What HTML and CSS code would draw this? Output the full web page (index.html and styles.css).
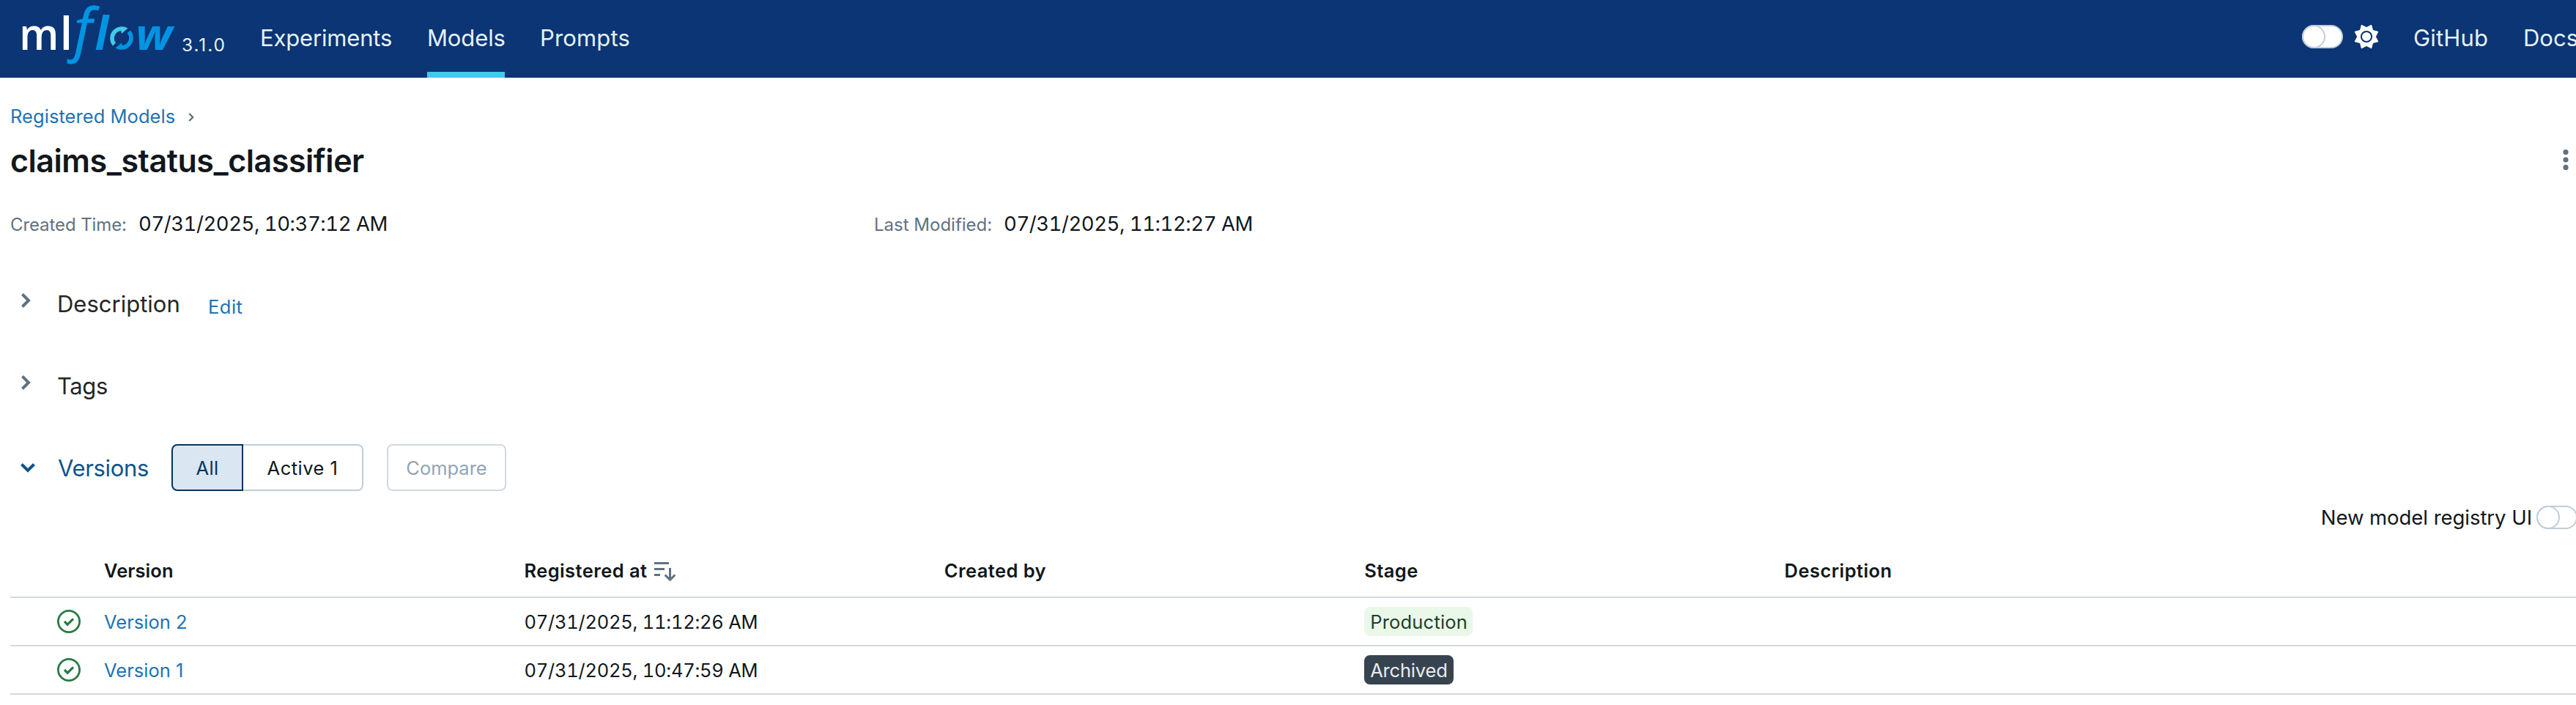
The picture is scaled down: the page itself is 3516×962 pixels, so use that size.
FILE: index.html
```html
<!DOCTYPE html>
<html lang="en">
<head>
<meta charset="utf-8">
<title>claims_status_classifier - MLflow</title>
<link rel="stylesheet" href="styles.css">
</head>
<body>
<header class="header">
  <svg class="logo" viewBox="28 0 212 106" role="img" aria-label="mlflow">
    <g class="logo-white">
      <text font-size="59" transform="translate(26.2 68) scale(.96 1)">m</text>
      <text font-size="62" x="81.7" y="68">l</text>
    </g>
    <g class="logo-blue">
      <text class="logo-f" font-size="79" x="101" y="67.5">f</text>
      <text font-size="62" x="129.5" y="68">l</text>
      <text font-size="59" transform="translate(185 68) scale(1.08 1)">w</text>
      <path d="M178 41.5A16 16 0 0 1 157.5 65.5L166 58.5L166.5 62A10.3 10.3 0 0 0 173.5 45Z"/>
    </g>
    <path class="logo-cyan" d="M154 62.5A16 16 0 0 1 174.5 38.5L166 46L165.5 42A10.3 10.3 0 0 0 158 58.5Z"/>
  </svg>
  <span class="release">3.1.0</span>
  <nav class="nav">
    <a class="nav-link nav-experiments">Experiments</a>
    <a class="nav-link nav-models active">Models</a>
    <a class="nav-link nav-prompts">Prompts</a>
  </nav>
  <div class="header-right">
    <span class="switch switch-dark"></span>
    <svg class="sun" viewBox="-17 -17 34 34">
      <path d="M0-12.4L6.7-15.8L8.6-8.6L15.8-6.7L12.4 0L15.8 6.7L8.6 8.6L6.7 15.8L0 12.4L-6.7 15.8L-8.6 8.6L-15.8 6.7L-12.4 0L-15.8-6.7L-8.6-8.6L-6.7-15.8Z"/>
      <circle r="7.1"/>
    </svg>
    <a class="nav-link nav-github">GitHub</a>
    <a class="nav-link nav-docs">Docs</a>
  </div>
</header>
<main class="page">
  <div class="breadcrumb">
    <a class="link crumb">Registered Models</a>
    <svg class="crumb-chevron" viewBox="0 0 8 12"><path d="M1.2 1L6.2 6L1.2 11"/></svg>
  </div>
  <div class="title-row">
    <h1 class="title">claims_status_classifier</h1>
    <svg class="kebab" viewBox="0 0 8 28"><circle cx="4" cy="3.6" r="3.6"/><circle cx="4" cy="14" r="3.6"/><circle cx="4" cy="24.4" r="3.6"/></svg>
  </div>
  <div class="meta">
    <div class="meta-item"><span class="meta-label">Created Time:</span><span class="meta-value">07/31/2025, 10:37:12 AM</span></div>
    <div class="meta-item"><span class="meta-label modified">Last Modified:</span><span class="meta-value">07/31/2025, 11:12:27 AM</span></div>
  </div>
  <section class="section">
    <svg class="chevron" viewBox="0 0 20 20"><path d="M5.5 1.5L14 10L5.5 18.5"/></svg>
    <h2 class="section-title">Description</h2>
    <a class="link edit">Edit</a>
  </section>
  <section class="section">
    <svg class="chevron" viewBox="0 0 20 20"><path d="M5.5 1.5L14 10L5.5 18.5"/></svg>
    <h2 class="section-title tags">Tags</h2>
  </section>
  <section class="section">
    <svg class="chevron open" viewBox="0 0 20 20"><path d="M1.5 5.5L10 14L18.5 5.5"/></svg>
    <h2 class="section-title versions">Versions</h2>
    <div class="segmented">
      <button class="button all">All</button><button class="button active-only">Active 1</button>
    </div>
    <button class="button compare" disabled>Compare</button>
  </section>
  <div class="registry-toggle">
    <span class="registry-label">New model registry UI</span>
    <span class="switch"></span>
  </div>
  <div class="table">
    <div class="row head">
      <span></span>
      <span class="th-version">Version</span>
      <span class="sorted"><span>Registered at</span>
        <svg class="sort" viewBox="0 0 30 26"><path class="bars" d="M0 1.5H20M0 9.5H14M0 17.5H8"/><path d="M21.5 8V24M14.7 17.5L21.5 24.3L28.3 17.5"/></svg>
      </span>
      <span>Created by</span>
      <span>Stage</span>
      <span class="th-description">Description</span>
    </div>
    <div class="row">
      <svg class="check" viewBox="0 0 32 32"><circle cx="16" cy="16" r="14.6"/><path d="M10 16L14.2 20.2L22 12.4"/></svg>
      <a class="link">Version 2</a>
      <span class="date">07/31/2025, 11:12:26 AM</span>
      <span></span>
      <span><span class="tag production">Production</span></span>
      <span></span>
    </div>
    <div class="row">
      <svg class="check" viewBox="0 0 32 32"><circle cx="16" cy="16" r="14.6"/><path d="M10 16L14.2 20.2L22 12.4"/></svg>
      <a class="link">Version 1</a>
      <span class="date">07/31/2025, 10:47:59 AM</span>
      <span></span>
      <span><span class="tag archived">Archived</span></span>
      <span></span>
    </div>
  </div>
</main>
</body>
</html>
```
FILE: styles.css
```css
*, *::before { box-sizing: border-box; }
html, body { margin: 0; overflow: hidden; }
body {
  height: 962px;
  background: #fff;
  color: #11171c;
  font-family: Inter, "Liberation Sans", sans-serif;
  font-size: 25.5px;
  white-space: nowrap;
}
h1, h2 { margin: 0; }
svg { display: block; flex: none; }
.link { color: #2272b4; }

/* Header */
.header {
  display: flex;
  height: 106px;
  padding-left: 28px;
  background: #0b3574;
  color: #e7f1fb;
}
.logo { width: 212px; height: 106px; overflow: visible; font-family: "Open Sans", sans-serif; font-weight: 650; }
.logo-white { fill: #fff; }
.logo-blue { fill: #0194e2; font-style: italic; font-weight: 700; }
.logo-f { font-weight: 500; stroke: #0194e2; stroke-width: .8; }
.logo-cyan { fill: #43c9ed; }
.release {
  width: 115px;
  padding: 49px 0 0 8px;
  font-size: 24.5px;
  line-height: 24px;
  letter-spacing: 1.9px;
}
.nav { display: flex; gap: 48px; }
.nav-link { font-size: 31px; line-height: 103px; }
.nav-experiments { width: 180px; letter-spacing: -.17px; }
.nav-models { width: 106px; letter-spacing: -.13px; }
.nav-prompts { letter-spacing: .16px; }
.active { box-shadow: inset 0 -8px #43c9ed; }
.header-right { display: flex; align-items: flex-start; margin-left: auto; }
.switch {
  display: flex;
  flex: none;
  width: 56px;
  height: 32px;
  border: 2px solid #c0cdd8;
  border-radius: 16px;
  background: #fff;
}
.switch::before {
  content: "";
  width: 32px;
  height: 32px;
  margin: -2px;
  border: 2px solid #c0cdd8;
  border-radius: 50%;
}
.switch-dark { margin: 34px 15px 0 0; }
.sun { width: 34px; height: 34px; margin: 33px 47px 0 0; fill: #fff; stroke: #fff; stroke-width: 1; stroke-linejoin: round; }
.sun circle { stroke: #0b3574; stroke-width: 2; }
.nav-github { width: 150px; letter-spacing: .17px; }
.nav-docs { width: 72px; }

/* Page heading */
.page { display: flex; flex-direction: column; padding: 32px 0 0 14px; }
.breadcrumb { display: flex; align-items: center; height: 40px; letter-spacing: .05px; }
.crumb { width: 243px; }
.crumb-chevron { width: 8px; height: 12px; margin-top: 3px; fill: none; stroke: #5f7281; stroke-width: 2.4; }
.title-row { display: flex; align-items: center; justify-content: space-between; height: 52px; margin-top: 15px; padding-right: 10px; }
.title { font-size: 43px; font-weight: 600; line-height: 52px; letter-spacing: -.47px; }
.kebab { width: 8px; height: 28px; margin-top: -2px; fill: #5f7281; }
.meta { display: grid; grid-template-columns: 1179px 1fr; height: 40px; margin-top: 40px; line-height: 40px; }
.meta-item { display: flex; align-items: baseline; }
.meta-label { width: 175px; color: #5f7281; font-size: 24px; letter-spacing: -.1px; }
.modified { width: 177px; letter-spacing: 0; }
.meta-value { font-size: 27.5px; letter-spacing: -.45px; font-feature-settings: "tnum"; }

/* Collapsible sections */
.section { display: flex; align-items: center; height: 64px; margin-top: 48px; }
.meta + .section { margin-top: 57px; }
.chevron { width: 20px; height: 20px; margin: -8px 33px 0 11px; fill: none; stroke: #5f7281; stroke-width: 4; }
.open { margin: 0 31px 0 14px; stroke: #0e538b; }
.section-title { width: 206px; padding-top: 1px; color: #262626; font-size: 31px; font-weight: 400; line-height: 64px; }
.tags { letter-spacing: -.39px; }
.versions { width: 155px; color: #0e538b; letter-spacing: -.33px; }
.edit { padding-top: 8px; letter-spacing: .5px; }
.segmented { display: flex; }
.button {
  height: 64px;
  padding: 1px 0 0;
  border: 2px solid #c0cdd8;
  border-radius: 8px;
  background: #fff;
  color: #11171c;
  font: 25.5px/59px Inter, sans-serif;
}
.all { width: 98px; border-color: #04355d; border-radius: 8px 0 0 8px; background: #dae6f2; color: #04355d; letter-spacing: .37px; }
.active-only { width: 164px; border-left: 0; border-radius: 0 8px 8px 0; letter-spacing: .49px; }
.compare { width: 163px; margin-left: 32px; border-color: #d1d9e1; color: #92a4b3; }

/* Registry switch */
.registry-toggle { display: flex; align-items: center; justify-content: flex-end; gap: 6px; height: 32px; margin: 20px -2px 0 0; }
.registry-label { font-size: 27.5px; line-height: 32px; letter-spacing: -.04px; }

/* Versions table */
.table { margin-top: 20px; }
.row {
  display: grid;
  grid-template-columns: 128px repeat(4, 573.4px) 1fr;
  align-items: center;
  height: 66px;
  border-bottom: 2px solid #d1d9e1;
}
.head { height: 74px; font-weight: 600; letter-spacing: .43px; }
.th-version { letter-spacing: .08px; }
.th-description { letter-spacing: .45px; }
.sorted { display: flex; gap: 10px; }
.sort { width: 30px; height: 26px; margin-top: 4px; fill: none; stroke: #5f7281; stroke-width: 3; }
.check { width: 32px; height: 32px; margin-left: 64px; fill: none; stroke: #277c43; stroke-width: 2.8; }
.check path { stroke-width: 3.2; }
.date { letter-spacing: -.25px; font-feature-settings: "tnum"; }
.tag { display: inline-block; height: 40px; padding: 0 8px; border-radius: 8px; line-height: 41px; vertical-align: middle; }
.production { width: 148px; background: #eaf8e9; color: #223f2b; letter-spacing: .2px; }
.archived { width: 122px; background: #37444f; color: #e8ecf0; letter-spacing: -.18px; }
```
